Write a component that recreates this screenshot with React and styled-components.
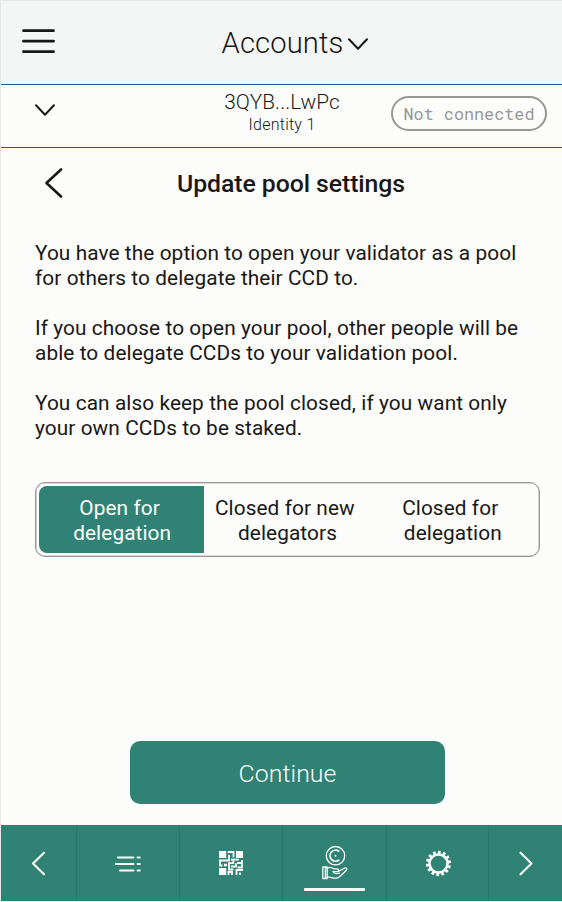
import React from "react";
import styled, { createGlobalStyle, css } from "styled-components";

const GlobalStyle = createGlobalStyle`
  *, *::before, *::after { box-sizing: border-box; }
  body { margin: 0; background: #fcfcfa; }
  button { font: inherit; letter-spacing: inherit; color: inherit; background: none; border: 0; padding: 0; }
`;

const Window = styled.div`
  width: 562px;
  height: 902px;
  display: flex;
  flex-direction: column;
  border: 1px solid #e8e8e8;
  border-right: 0;
  background: #fcfcfa;
  color: #181817;
  font-family: Roboto, sans-serif;
  font-size: 20.8px;
  font-weight: 385;
  line-height: 25px;
  letter-spacing: 0.09px;
  overflow: hidden;
`;

const centerGrid = css`
  display: grid;
  align-items: center;
  flex: none;
`;

const Header = styled.header`
  ${centerGrid}
  grid-template-columns: 100px 1fr 73px;
  height: 84px;
  background: #f4f6f6;
  border-bottom: 1px solid #285a78;
`;

const MenuButton = styled.button`
  display: flex;
  padding: 0 0 3px 20px;
`;

const PageName = styled.h1`
  display: flex;
  justify-content: center;
  align-items: center;
  gap: 5px;
  margin: 0;
  font-size: 29.2px;
  font-weight: 300;
  line-height: 36px;
  letter-spacing: 0.1px;

  svg { margin-top: 2px; }
`;

const AccountBar = styled.section`
  ${centerGrid}
  grid-template-columns: 172px 1fr 171px;
  height: 63px;
  border-bottom: 1px solid #285a78;
`;

const ExpandButton = styled.button`
  display: flex;
  padding: 0 0 12px 34px;
`;

const AccountName = styled.div`
  padding-bottom: 8px;
  text-align: center;
  font-weight: 300;
  font-size: 20.8px;
  line-height: 24px;
  letter-spacing: 0.1px;
`;

const Identity = styled.div`
  font-size: 16px;
  line-height: 21px;
  letter-spacing: 0.25px;
`;

const Status = styled.div`
  width: 156px;
  height: 35px;
  margin-bottom: 5px;
  display: flex;
  align-items: center;
  justify-content: center;
  border: 2px solid #979797;
  border-radius: 18px;
  color: #979797;
  font-family: "Roboto Mono", "Liberation Mono", monospace;
  font-size: 16.8px;
  font-weight: 400;
  letter-spacing: 0;
`;

const Main = styled.main`
  flex: 1;
  display: flex;
  flex-direction: column;
  padding: 0 22px 21px 34px;
`;

const TitleRow = styled.div`
  display: grid;
  grid-template-columns: 60px 1fr 53px;
  align-items: center;
  height: 72px;
  margin-bottom: 21px;
`;

const BackButton = styled.button`
  display: flex;
  padding: 0 0 2px 9px;
`;

const Title = styled.h2`
  margin: 0;
  font-size: 24.8px;
  font-weight: 490;
  line-height: 30px;
  letter-spacing: -0.06px;
  text-align: center;
`;

const Paragraph = styled.p`
  margin: 0 0 25px;
`;

const Segments = styled.div`
  display: flex;
  width: 505px;
  height: 75px;
  margin-top: 16px;
  padding: 3px 4px 3px 3px;
  border: 1px solid #979797;
  border-radius: 10px;
  box-shadow: inset 0 0 0 0.6px #b4b4b2;
`;

const Segment = styled.button`
  flex: 1;
  padding: 2px 8px 0 9px;
  text-align: center;
  white-space: break-spaces;
  border-radius: 8px 0 0 8px;
  ${(p) => p.$active && css`
    background: #308274;
    color: #fcfcfa;
    font-weight: 410;
  `}
`;

const Continue = styled.button`
  width: 315px;
  height: 63px;
  margin: auto 0 0 95px;
  padding-top: 1px;
  border-radius: 10px;
  background: #308274;
  color: #fcfcfa;
  font-size: 24.8px;
  font-weight: 300;
`;

const NavBar = styled.nav`
  display: grid;
  grid-template-columns: 76px 103px 103px 104px 102px 1fr;
  height: 76px;
  flex: none;
  background: #308274;
  color: #fcfcfa;
`;

const NavItem = styled.button`
  display: flex;
  position: relative;
  align-items: center;
  justify-content: center;
  border-right: 1px solid #2b766a;
  &:last-child { border-right: 0; }
  ${(p) => p.$active && css`
    &::after {
      content: "";
      position: absolute;
      left: 21px;
      bottom: 10px;
      width: 61px;
      height: 3px;
      border-radius: 1px;
      background: #fcfcfa;
    }
  `}
`;

const Icon = styled.svg`
  display: block;
  flex: none;
  overflow: visible;
  fill: none;
  stroke: currentColor;
`;

const Chevron = ({ w, h, d, thickness }) => (
  <Icon width={w} height={h} viewBox={`0 0 ${w} ${h}`} strokeWidth={thickness} strokeLinecap="round" strokeLinejoin="round">
    <path d={d} />
  </Icon>
);

const ChevronDown = () => <Chevron w={20} h={12} d="M1 1.3 10 10.7 19 1.3" thickness={2} />;

const MenuIcon = () => (
  <Icon width="34" height="26" viewBox="0 0 34 26" strokeWidth="2.8" strokeLinecap="round">
    <path d="M2.500 2.7H32.500M2.500 13.2H32.500M2.500 23.7H32.500" />
  </Icon>
);

const ListIcon = () => (
  <Icon width="27" height="17" viewBox="0 0 27 17" strokeWidth="2.2" strokeLinecap="round">
    <path d="M3 2.500H18.400M1 9H18.400M5 15.500H18.400M22.700 2.500h2M22.700 9h2M22.700 15.500h2" />
  </Icon>
);

const QrIcon = () => (
  <Icon width="24" height="24" viewBox="0 0 24 24" strokeWidth="1.8">
    <path fill="currentColor" stroke="none" d="M0 0h7.2v7H0zM17 0h7v7h-7zM0 17h7.2v7H0zM5 12.7h3v2.600H5z" />
    <path d="M8.700 1H14.500V6.500M10 3.800V9.500H1V14.500H3.500M12 8.700H20M14.300 8.700V12.200H10V18.500H14.500M17 12.200V15.500H12M18 12H23V16.500H18.500M23 9V13M9.500 24V21H13V24M17.500 24V19H24M21 24V21.500" />
  </Icon>
);

const EarnIcon = () => (
  <Icon width="26" height="34" viewBox="0 0 26 34" strokeWidth="1.3" strokeLinecap="round" strokeLinejoin="round">
    <circle cx="13.500" cy="9.700" r="9.200" />
    <path d="M16.700 5.200A5.500 5.500 0 1 0 16.700 14.200" strokeWidth="1.700" />
    <circle cx="13.500" cy="9.700" r="1" fill="currentColor" stroke="none" />
    <path d="M.8 21H5.200V32.500H.8zM3.400 21V32.500" />
    <path d="M5.200 22.300C8 20.800 10 21.500 11.500 22.800H15C17.300 22.800 17.300 25.600 15 25.600H11M16.700 25.200 22.300 22.200C24.500 21.200 25.700 23.300 24 24.800L17.800 30.500C16.500 31.600 15.200 32.200 13.500 32.200 10.500 32.200 8.500 30.800 5.200 30.800M11 25.600C11.700 27.600 14 28 17.500 27.200" />
  </Icon>
);

const TEETH = Array.from({ length: 14 }, (_, i) => (i * 360) / 14 + 4);

const GearIcon = () => (
  <Icon width="26" height="26" viewBox="0 0 26 26">
    <circle cx="13.500" cy="13.500" r="9" strokeWidth="2.5" />
    {TEETH.map((angle) => (
      <path key={angle} d="M13.500 .9V4.500" strokeWidth="2.800" transform={`rotate(${angle} 13.500 13.500)`} />
    ))}
  </Icon>
);

const OPTIONS = ["Open for delegation", "Closed for new delegators", "Closed for delegation"];

export default function App() {
  return (
    <>
      <GlobalStyle />
      <Window>
        <Header>
          <MenuButton aria-label="Menu"><MenuIcon /></MenuButton>
          <PageName>Accounts<ChevronDown /></PageName>
        </Header>
        <AccountBar>
          <ExpandButton aria-label="Show accounts"><ChevronDown /></ExpandButton>
          <AccountName>
            3QYB...LwPc
            <Identity>Identity 1</Identity>
          </AccountName>
          <Status>Not connected</Status>
        </AccountBar>
        <Main>
          <TitleRow>
            <BackButton aria-label="Back">
              <Chevron w={18} h={30} d="M17 1.500 2.500 15 17 28.500" thickness={2.6} />
            </BackButton>
            <Title>Update pool settings</Title>
          </TitleRow>
          <Paragraph>You have the option to open your validator as a pool<br />for others to delegate their CCD to.</Paragraph>
          <Paragraph>If you choose to open your pool, other people will be<br />able to delegate CCDs to your validation pool.</Paragraph>
          <Paragraph>You can also keep the pool closed, if you want only<br />your own CCDs to be staked.</Paragraph>
          <Segments>
            {OPTIONS.map((label, i) => <Segment key={label} $active={i === 0}>{label}</Segment>)}
          </Segments>
          <Continue>Continue</Continue>
        </Main>
        <NavBar>
          <NavItem aria-label="Previous"><Chevron w={14} h={24} d="M12 1.700 1 12.500 12 23.300" thickness={2.1} /></NavItem>
          <NavItem aria-label="Activity"><ListIcon /></NavItem>
          <NavItem aria-label="QR code"><QrIcon /></NavItem>
          <NavItem aria-label="Earn" $active><EarnIcon /></NavItem>
          <NavItem aria-label="Settings"><GearIcon /></NavItem>
          <NavItem aria-label="Next"><Chevron w={14} h={24} d="M1.500 1.700 12.500 12.500 1.500 23.300" thickness={2.1} /></NavItem>
        </NavBar>
      </Window>
    </>
  );
}
